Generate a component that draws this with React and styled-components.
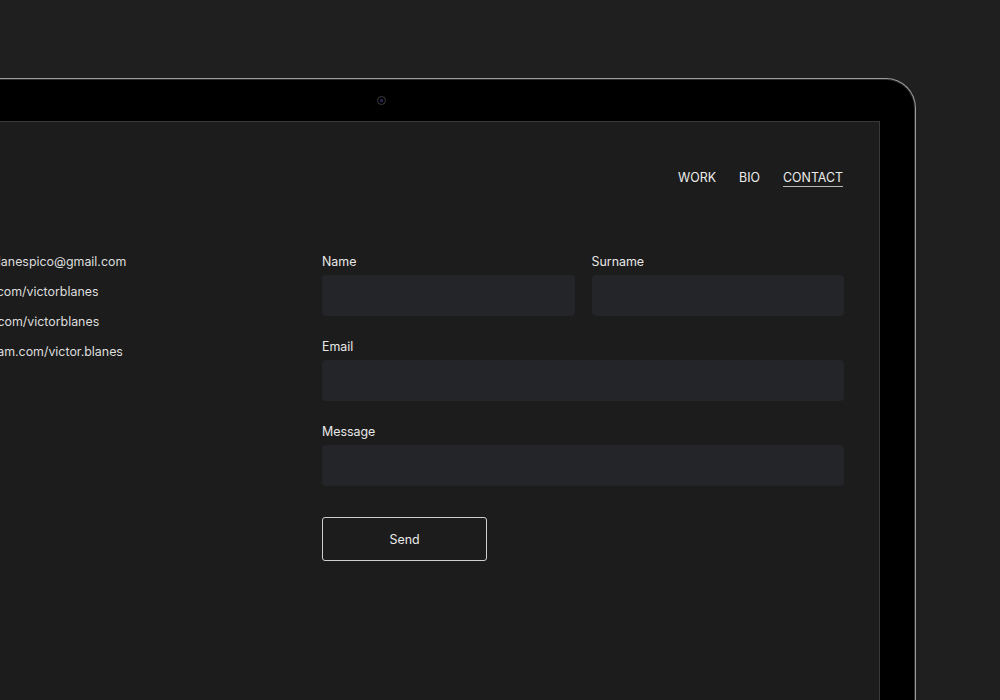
import styled, { createGlobalStyle } from "styled-components";

const GlobalStyle = createGlobalStyle`
  html, body {
    margin: 0;
    padding: 0;
    height: 700px;
    overflow: hidden;
    background: #1f1f1f;
    font-family: Inter, "Noto Sans", sans-serif;
  }
`;

const Stage = styled.div`
  width: 1000px;
  height: 700px;
  overflow: hidden;
`;

const Laptop = styled.div`
  margin: 78px 0 0 -153px;
  width: 1069px;
  height: 640px;
  box-sizing: border-box;
  padding: 0 35px;
  background: #000;
  border: 1px solid #9c9c9c;
  border-bottom: none;
  border-radius: 30px 30px 0 0;
  box-shadow: inset 0 0 0 1px #2c2c2c;
`;

const Bezel = styled.div`
  height: 42px;
  padding-top: 1px;
  box-sizing: border-box;
  display: flex;
  align-items: center;
  justify-content: center;
`;

const Camera = styled.div`
  width: 9px;
  height: 9px;
  box-sizing: border-box;
  border-radius: 50%;
  border: 1.5px solid #3c3c42;
  display: flex;
  align-items: center;
  justify-content: center;

  &::after {
    content: "";
    width: 3px;
    height: 3px;
    border-radius: 50%;
    background: #2e2b62;
  }
`;

const Screen = styled.div`
  height: 620px;
  box-sizing: border-box;
  background: #1c1c1c;
  border: 1px solid #383838;
  border-bottom: none;
  padding: 48px 35px 0 73px;
  color: #e6e6e6;
  font-size: 12.4px;
`;

const Nav = styled.nav`
  display: flex;
  justify-content: flex-end;
  gap: 23px;
  margin-right: 1px;
`;

const NavItem = styled.a`
  display: inline-block;
  line-height: 16px;
  color: #ececec;
  text-transform: uppercase;
  text-decoration: none;
  border-bottom: 1px solid ${(p) => (p.$active ? "#b8b8b8" : "transparent")};
`;

const Main = styled.div`
  margin-top: 67px;
  display: flex;
  justify-content: space-between;
`;

const Links = styled.ul`
  list-style: none;
  margin: 0;
  padding: 0;
  display: flex;
  flex-direction: column;
  gap: 14px;
`;

const LinkItem = styled.li`
  line-height: 16px;
  color: #dedede;
  white-space: nowrap;
`;

const Form = styled.form`
  width: 522px;
  display: flex;
  flex-direction: column;
  gap: 23px;
`;

const Row = styled.div`
  display: grid;
  grid-template-columns: 1fr 1fr;
  gap: 17px;
`;

const Field = styled.label`
  display: flex;
  flex-direction: column;
  gap: 5px;
`;

const Label = styled.span`
  line-height: 16px;
  color: #e8e8e8;
`;

const Input = styled.input`
  height: 41px;
  box-sizing: border-box;
  border: none;
  border-radius: 4px;
  background: #232529;
  color: #eee;
  padding: 0 12px;
  font: inherit;
  outline: none;
`;

const Button = styled.button`
  margin-top: 8px;
  width: 165px;
  height: 44px;
  background: transparent;
  border: 1px solid #cfcfcf;
  border-radius: 3px;
  color: #ececec;
  font: inherit;
`;

const links = [
  "victorblanespico@gmail.com",
  "twitter.com/victorblanes",
  "github.com/victorblanes",
  "instagram.com/victor.blanes",
];

export default function App() {
  return (
    <Stage>
      <GlobalStyle />
      <Laptop>
        <Bezel>
          <Camera />
        </Bezel>
        <Screen>
          <Nav>
            <NavItem>Work</NavItem>
            <NavItem>Bio</NavItem>
            <NavItem $active>Contact</NavItem>
          </Nav>
          <Main>
            <Links>
              {links.map((l) => (
                <LinkItem key={l}>{l}</LinkItem>
              ))}
            </Links>
            <Form onSubmit={(e) => e.preventDefault()}>
              <Row>
                <Field>
                  <Label>Name</Label>
                  <Input />
                </Field>
                <Field>
                  <Label>Surname</Label>
                  <Input />
                </Field>
              </Row>
              <Field>
                <Label>Email</Label>
                <Input />
              </Field>
              <Field>
                <Label>Message</Label>
                <Input />
              </Field>
              <Button type="submit">Send</Button>
            </Form>
          </Main>
        </Screen>
      </Laptop>
    </Stage>
  );
}
